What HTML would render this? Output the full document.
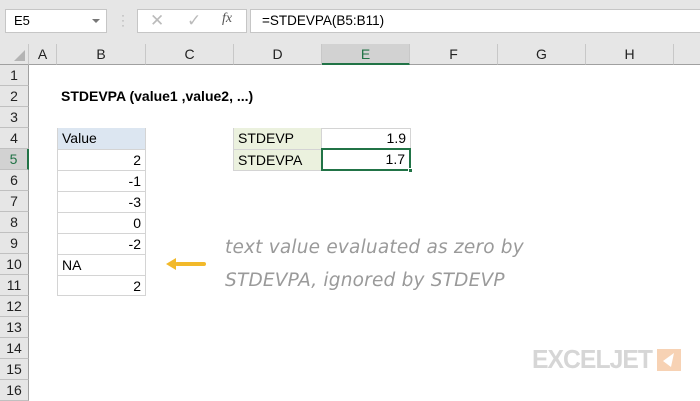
<!DOCTYPE html>
<html><head><meta charset="utf-8"><style>
*{margin:0;padding:0;box-sizing:border-box}
body{width:700px;height:400px;overflow:hidden;background:#fff;font-family:"Liberation Sans",Arial,sans-serif;font-size:13px;position:relative;color:#000}
.a{position:absolute}
.ch{position:absolute;top:44px;height:21px;background:#e6e6e6;border-right:1px solid #c8c8c8;border-bottom:1px solid #a0a0a0;text-align:center;line-height:21px;font-size:14px;color:#222}
.rh{position:absolute;left:0;width:29px;height:21px;background:#e6e6e6;border-bottom:1px solid #c0c0c0;border-right:1px solid #a0a0a0;text-align:center;line-height:21px;font-size:14px;color:#222}
.c{position:absolute;height:21px;line-height:21px;font-size:14px;padding:0 4px}
</style></head><body>
<div class="a" style="left:0;top:0;width:700px;height:44px;background:#e6e6e6"></div>
<div class="a" style="left:5px;top:9px;width:102px;height:24px;background:#fff;border:1px solid #c6c6c6;line-height:22px;padding-left:8px;font-size:13px">E5</div>
<div class="a" style="left:92px;top:19px;width:0;height:0;border-left:4px solid transparent;border-right:4px solid transparent;border-top:4px solid #777"></div>
<div class="a" style="left:121px;top:13px;color:#aaa;font-size:12px;line-height:5px">·<br>·<br>·</div>
<div class="a" style="left:137px;top:9px;width:110px;height:24px;background:#fff;border:1px solid #c6c6c6"></div>
<div class="a" style="left:150px;top:11px;color:#bbb;font-size:17px">✕</div>
<div class="a" style="left:187px;top:11px;color:#bbb;font-size:17px">✓</div>
<div class="a" style="left:222px;top:11px;color:#555;font-size:14px;font-style:italic;font-family:'Liberation Serif',serif">fx</div>
<div class="a" style="left:250px;top:9px;width:450px;height:24px;background:#fff;border:1px solid #c6c6c6;border-right:none;line-height:22px;padding-left:11px;font-size:13.5px">=STDEVPA(B5:B11)</div>
<div class="ch" style="left:0;width:29px"><div style="position:absolute;right:3px;bottom:3px;border-left:11px solid transparent;border-bottom:11px solid #b4b4b4"></div></div>
<div class="ch" style="left:29px;width:28px">A</div>
<div class="ch" style="left:57px;width:89px">B</div>
<div class="ch" style="left:146px;width:88px">C</div>
<div class="ch" style="left:234px;width:88px">D</div>
<div class="ch" style="left:322px;width:88px;background:#d2d2d2;border-bottom:2px solid #217346;color:#217346">E</div>
<div class="ch" style="left:410px;width:88px">F</div>
<div class="ch" style="left:498px;width:88px">G</div>
<div class="ch" style="left:586px;width:88px">H</div>
<div class="ch" style="left:674px;width:30px"></div>
<div class="rh" style="top:65px">1</div><div class="rh" style="top:86px">2</div><div class="rh" style="top:107px">3</div><div class="rh" style="top:128px">4</div>
<div class="rh" style="top:149px;background:#d2d2d2;border-right:2px solid #217346;color:#217346">5</div>
<div class="rh" style="top:170px">6</div><div class="rh" style="top:191px">7</div><div class="rh" style="top:212px">8</div><div class="rh" style="top:233px">9</div><div class="rh" style="top:254px">10</div><div class="rh" style="top:275px">11</div><div class="rh" style="top:296px">12</div><div class="rh" style="top:317px">13</div><div class="rh" style="top:338px">14</div><div class="rh" style="top:359px">15</div><div class="rh" style="top:380px">16</div>
<div class="c" style="left:57px;top:86px;font-weight:bold">STDEVPA (value1 ,value2, ...)</div>
<div class="a" style="left:57px;top:128px;width:89px;height:168px;border:1px solid #d4d4d4"></div>
<div class="c" style="left:58px;top:128px;width:87px;background:#dce6f1">Value</div>
<div class="c" style="left:58px;top:149px;width:87px;text-align:right;border-top:1px solid #d4d4d4">2</div>
<div class="c" style="left:58px;top:170px;width:87px;text-align:right;border-top:1px solid #d4d4d4">-1</div>
<div class="c" style="left:58px;top:191px;width:87px;text-align:right;border-top:1px solid #d4d4d4">-3</div>
<div class="c" style="left:58px;top:212px;width:87px;text-align:right;border-top:1px solid #d4d4d4">0</div>
<div class="c" style="left:58px;top:233px;width:87px;text-align:right;border-top:1px solid #d4d4d4">-2</div>
<div class="c" style="left:58px;top:254px;width:87px;border-top:1px solid #d4d4d4">NA</div>
<div class="c" style="left:58px;top:275px;width:87px;text-align:right;border-top:1px solid #d4d4d4">2</div>
<div class="a" style="left:233px;top:128px;width:178px;height:43px;border:1px solid #d4d4d4"></div>
<div class="c" style="left:234px;top:128px;width:88px;background:#ebf1de;border-right:1px solid #d4d4d4">STDEVP</div>
<div class="c" style="left:234px;top:149px;width:88px;background:#ebf1de;border-right:1px solid #d4d4d4;border-top:1px solid #d4d4d4">STDEVPA</div>
<div class="c" style="left:322px;top:128px;width:88px;text-align:right">1.9</div>
<div class="c" style="left:321px;top:148px;width:90px;height:23px;text-align:right;border:2px solid #217346;line-height:19px">1.7</div>
<div class="a" style="left:408px;top:168px;width:5px;height:5px;background:#217346;border:1px solid #fff"></div>
<div class="a" style="left:166px;top:258px;width:0;height:0;border-top:6px solid transparent;border-bottom:6px solid transparent;border-right:10px solid #f2b92a"></div>
<div class="a" style="left:175px;top:262px;width:31px;height:4px;background:#f2b92a;border-radius:2px"></div>
<div class="a" style="left:225px;top:231px;font-family:'DejaVu Sans',sans-serif;font-style:italic;font-size:18.5px;color:#9a9a9a;line-height:33px;letter-spacing:0.2px;white-space:nowrap">text value evaluated as zero by<br>STDEVPA, ignored by STDEVP</div>
<div class="a" style="left:532px;top:344px;font-family:'Liberation Sans',sans-serif;font-weight:bold;font-size:26px;color:#d6d6d6;letter-spacing:-1px;transform:scaleX(0.95);transform-origin:left">EXCELJET</div>
<div class="a" style="left:657px;top:349px;width:24px;height:22px;background:#f7d2b4"><svg width="24" height="22"><polygon points="17,4 6,12 14,18" fill="#fff"/></svg></div>
</body></html>
